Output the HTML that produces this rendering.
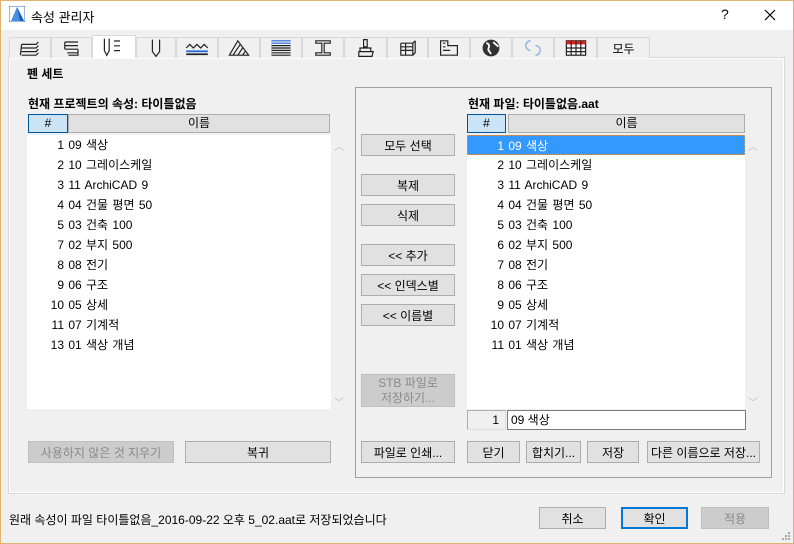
<!DOCTYPE html>
<html><head><meta charset="utf-8"><style>
*{box-sizing:border-box;margin:0;padding:0}
body{width:794px;height:544px;background:#f0f0f0;font-family:"Liberation Sans","Noto Sans CJK KR","NanumGothic",sans-serif;font-size:12px;color:#000;position:relative;overflow:hidden}
.a{position:absolute}
.win{left:0;top:0;width:794px;height:544px;border:1px solid #e0b36e}
.title{left:1px;top:1px;width:792px;height:29px;background:#fff}
.tab{position:absolute;top:37px;height:21px;border:1px solid #d9d9d9;border-bottom:none;background:#f0f0f0;display:flex;align-items:center;justify-content:center}
.tab svg{transform:scale(1.2)}
.tab.act{top:35px;height:23px;background:#fff;border-color:#d9d9d9;z-index:2}
.panel{left:8px;top:57px;width:777px;height:437px;background:#fff;border:1px solid #d9d9d9}
.inner{left:10px;top:59px;width:773px;height:433px;background:#f0f0f0}
.btn{position:absolute;height:22px;border:1px solid #adadad;background:#e1e1e1;display:flex;align-items:center;justify-content:center;font-size:12px}
.dis{color:#8a8a8a;background:#cccccc;border-color:#bfbfbf}
.list{position:absolute;background:#fff}
.row{position:absolute;height:20px;line-height:20px;white-space:nowrap;word-spacing:1px}
.num{display:inline-block;text-align:right}
.hdr{position:absolute;top:114px;height:19px;border:1px solid #adadad;background:#e1e1e1;text-align:center;line-height:17px}
.hsel{background:#cce4f7;border-color:#005499}
.lbl{position:absolute;font-weight:bold;font-size:12px}
.arr{position:absolute;color:#bbb;font-size:10px}
</style></head><body>
<div class="a win"></div>
<div class="a title"></div>
<svg class="a" style="left:9px;top:6px" width="16" height="16"><polygon points="2,15 8,1 15,15" fill="#4a90e2"/><polygon points="8,1 11,15 15,15" fill="#1a5fb4"/><rect x="0" y="0" width="16" height="16" fill="none" stroke="#2d6fbf" stroke-width="1"/></svg>
<div class="a" style="left:31px;top:7px;font-size:13px">속성 관리자</div>
<div class="a" style="left:721px;top:6px;font-size:14px">?</div>
<svg class="a" style="left:764px;top:9px" width="12" height="12"><path d="M1 1L11 11M11 1L1 11" stroke="#000" stroke-width="1.2"/></svg>

<div class="a panel"></div>
<div class="a inner"></div>

<div class="tab" style="left:9px;width:42px"><svg width="18" height="14"><path d="M2 4h12l2-2M2 7h12l2-2M2 10h12l2-2M2 13h12l2-2M2 4l-1 9" stroke="#222" fill="none"/></svg></div>
<div class="tab" style="left:51px;width:41px"><svg width="18" height="16"><path d="M3 3h11M3 6h11M3 9h11M5 12h9M3 3v6M14 9v5H6" stroke="#222" fill="none"/></svg></div>
<div class="tab act" style="left:92px;width:44px"><svg width="22" height="16"><path d="M3 1v10l2 4 2-4V1M11 3h5M11 7h5M11 11h5" stroke="#222" fill="none"/></svg></div>
<div class="tab" style="left:136px;width:40px"><svg width="12" height="16"><path d="M3 1v10l3 4 3-4V1" stroke="#222" fill="none"/></svg></div>
<div class="tab" style="left:176px;width:42px"><svg width="20" height="12"><path d="M1 6l3-3 3 3 3-3 3 3 3-3 3 3" stroke="#222" fill="none"/><rect x="1" y="8" width="18" height="1.5" fill="#2266dd"/><rect x="1" y="10.5" width="18" height="1.5" fill="#222"/></svg></div>
<div class="tab" style="left:218px;width:42px"><svg width="18" height="14"><path d="M1 13L8 1l9 12zM4 13l6-9M8 13l4-6M12 13l2-3" stroke="#222" fill="none"/></svg></div>
<div class="tab" style="left:260px;width:42px"><svg width="18" height="14"><path d="M1 1h16M1 3h16" stroke="#2266dd"/><path d="M1 5h16M1 7h16M1 9h16M1 11h16M1 13h16" stroke="#222"/></svg></div>
<div class="tab" style="left:302px;width:42px"><svg width="14" height="14"><path d="M1 1h12v2H8v8h5v2H1v-2h5V3H1z" stroke="#222" fill="none"/></svg></div>
<div class="tab" style="left:344px;width:43px"><svg width="16" height="16"><path d="M6 1h3v6H6zM3 8h9v3H3zM2 11h12l-1 4H2z" stroke="#222" fill="none"/></svg></div>
<div class="tab" style="left:387px;width:41px"><svg width="16" height="14"><path d="M2 3h10l2-2M2 3v10h10V3M12 13l2-2V1M2 6h10M2 9h10M6 3v10" stroke="#222" fill="none"/></svg></div>
<div class="tab" style="left:428px;width:42px"><svg width="16" height="14"><path d="M1 1h6v4h8v8H1zM3 3h2M3 6h2M3 9h6" stroke="#222" fill="none"/></svg></div>
<div class="tab" style="left:470px;width:42px"><svg width="16" height="16"><circle cx="8" cy="8" r="7" fill="#333"/><path d="M4 4c2 0 3 2 2 4s1 3 2 5M10 3c1 2 3 2 4 4" stroke="#fff" fill="none" stroke-width="1.5"/></svg></div>
<div class="tab" style="left:512px;width:42px"><svg width="16" height="16"><path d="M6 2a4 4 0 1 0 0 8M10 6a4 4 0 1 1 0 8" stroke="#9ab8e6" fill="none" stroke-width="1.3"/></svg></div>
<div class="tab" style="left:554px;width:43px"><svg width="18" height="14"><rect x="1" y="1" width="16" height="12" fill="#fff" stroke="#222"/><rect x="1" y="1" width="16" height="3" fill="#d22"/><path d="M5 1v12M9 1v12M13 1v12M1 7h16M1 10h16" stroke="#222"/></svg></div>
<div class="tab" style="left:597px;width:53px">모두</div>

<div class="lbl" style="left:27px;top:65px">펜 세트</div>

<div class="lbl" style="left:28px;top:95px">현재 프로젝트의 속성: 타이틀없음</div>
<div class="hdr hsel" style="left:28px;width:40px">#</div>
<div class="hdr" style="left:68px;width:262px">이름</div>
<div class="list" style="left:27px;top:135px;width:304px;height:274px">
<div class="row" style="top:0"><span class="num" style="width:37px">1</span> 09 색상</div>
<div class="row" style="top:20px"><span class="num" style="width:37px">2</span> 10 그레이스케일</div>
<div class="row" style="top:40px"><span class="num" style="width:37px">3</span> 11 ArchiCAD 9</div>
<div class="row" style="top:60px"><span class="num" style="width:37px">4</span> 04 건물 평면 50</div>
<div class="row" style="top:80px"><span class="num" style="width:37px">5</span> 03 건축 100</div>
<div class="row" style="top:100px"><span class="num" style="width:37px">7</span> 02 부지 500</div>
<div class="row" style="top:120px"><span class="num" style="width:37px">8</span> 08 전기</div>
<div class="row" style="top:140px"><span class="num" style="width:37px">9</span> 06 구조</div>
<div class="row" style="top:160px"><span class="num" style="width:37px">10</span> 05 상세</div>
<div class="row" style="top:180px"><span class="num" style="width:37px">11</span> 07 기계적</div>
<div class="row" style="top:200px"><span class="num" style="width:37px">13</span> 01 색상 개념</div>
</div>
<div class="arr" style="left:334px;top:138px">︿</div>
<div class="arr" style="left:334px;top:394px">﹀</div>
<div class="btn dis" style="left:28px;top:441px;width:146px">사용하지 않은 것 지우기</div>
<div class="btn" style="left:185px;top:441px;width:146px">복귀</div>

<div class="a" style="left:355px;top:87px;width:417px;height:391px;border:1px solid #a0a0a0"></div>

<div class="btn" style="left:361px;top:134px;width:94px">모두 선택</div>
<div class="btn" style="left:361px;top:174px;width:94px">복제</div>
<div class="btn" style="left:361px;top:204px;width:94px">식제</div>
<div class="btn" style="left:361px;top:244px;width:94px">&lt;&lt; 추가</div>
<div class="btn" style="left:361px;top:274px;width:94px">&lt;&lt; 인덱스별</div>
<div class="btn" style="left:361px;top:304px;width:94px">&lt;&lt; 이름별</div>
<div class="btn dis" style="left:361px;top:374px;width:94px;height:33px;line-height:15px;text-align:center;flex-direction:column">STB 파일로<br>저장하기...</div>
<div class="btn" style="left:361px;top:441px;width:94px">파일로 인쇄...</div>

<div class="lbl" style="left:468px;top:95px">현재 파일: 타이틀없음.aat</div>
<div class="hdr hsel" style="left:467px;width:39px">#</div>
<div class="hdr" style="left:508px;width:237px">이름</div>
<div class="list" style="left:467px;top:135px;width:278px;height:274px">
<div class="row" style="top:0;left:0;width:278px;background:#3399ff;color:#fff;border:1px dotted #c96"><span class="num" style="width:36px">1</span> 09 색상</div>
<div class="row" style="top:20px"><span class="num" style="width:37px">2</span> 10 그레이스케일</div>
<div class="row" style="top:40px"><span class="num" style="width:37px">3</span> 11 ArchiCAD 9</div>
<div class="row" style="top:60px"><span class="num" style="width:37px">4</span> 04 건물 평면 50</div>
<div class="row" style="top:80px"><span class="num" style="width:37px">5</span> 03 건축 100</div>
<div class="row" style="top:100px"><span class="num" style="width:37px">6</span> 02 부지 500</div>
<div class="row" style="top:120px"><span class="num" style="width:37px">7</span> 08 전기</div>
<div class="row" style="top:140px"><span class="num" style="width:37px">8</span> 06 구조</div>
<div class="row" style="top:160px"><span class="num" style="width:37px">9</span> 05 상세</div>
<div class="row" style="top:180px"><span class="num" style="width:37px">10</span> 07 기계적</div>
<div class="row" style="top:200px"><span class="num" style="width:37px">11</span> 01 색상 개념</div>
</div>
<div class="arr" style="left:748px;top:138px">︿</div>
<div class="arr" style="left:748px;top:394px">﹀</div>
<div class="a" style="left:467px;top:410px;width:39px;height:20px;border:1px solid #adadad;border-right-color:#ddd;border-bottom-color:#ddd;background:#f0f0f0;text-align:right;padding-right:6px;line-height:18px">1</div>
<div class="a" style="left:507px;top:410px;width:239px;height:20px;border:1px solid #7a7a7a;background:#fff;padding-left:3px;line-height:18px">09 색상</div>
<div class="btn" style="left:467px;top:441px;width:53px">닫기</div>
<div class="btn" style="left:526px;top:441px;width:55px">합치기...</div>
<div class="btn" style="left:587px;top:441px;width:52px">저장</div>
<div class="btn" style="left:647px;top:441px;width:113px">다른 이름으로 저장...</div>

<div class="a" style="left:9px;top:511px">원래 속성이 파일 타이틀없음_2016-09-22 오후 5_02.aat로 저장되었습니다</div>
<div class="btn" style="left:539px;top:507px;width:67px">취소</div>
<div class="btn" style="left:621px;top:507px;width:67px;border:2px solid #0078d7">확인</div>
<div class="btn dis" style="left:701px;top:507px;width:68px">적용</div>
<svg class="a" style="left:781px;top:531px" width="10" height="10"><g fill="#aaa"><rect x="7" y="1" width="2" height="2"/><rect x="4" y="4" width="2" height="2"/><rect x="7" y="4" width="2" height="2"/><rect x="1" y="7" width="2" height="2"/><rect x="4" y="7" width="2" height="2"/><rect x="7" y="7" width="2" height="2"/></g></svg>
</body></html>
